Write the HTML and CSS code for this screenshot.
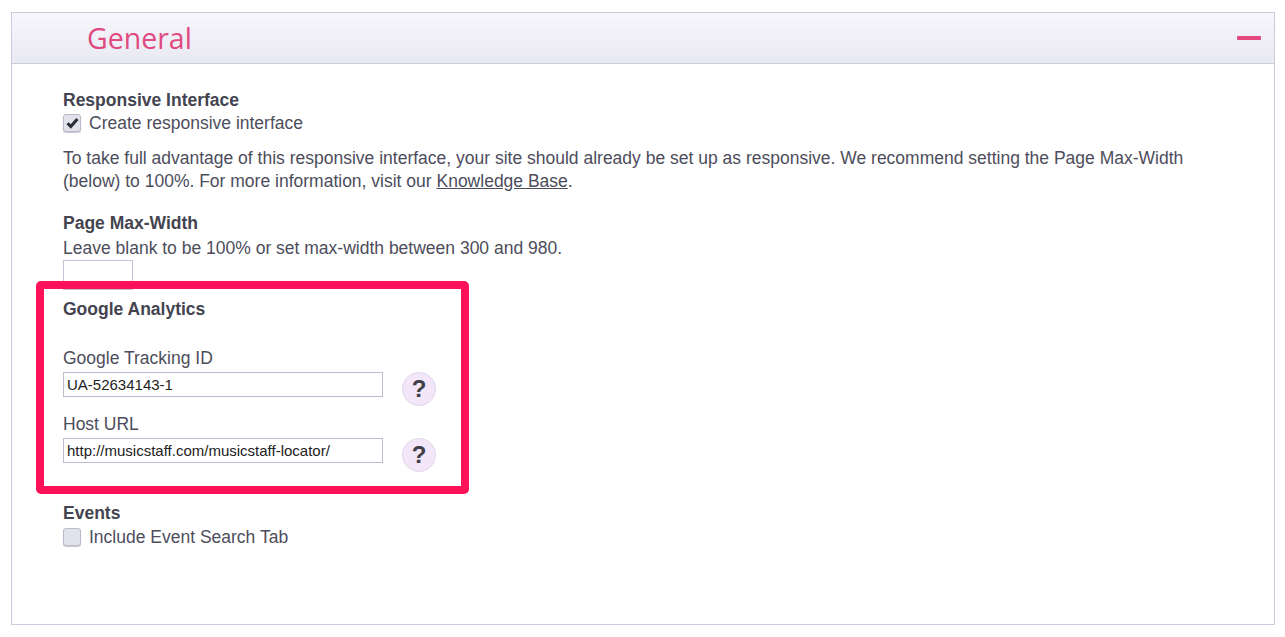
FILE: index.html
```html
<!DOCTYPE html>
<html lang="en">
<head>
    <meta charset="UTF-8">
    <meta name="viewport" content="width=device-width, initial-scale=1.0">
    <title>General Settings</title>
    <link rel="stylesheet" href="styles.css">
</head>
<body>
    <section class="panel">
        <header class="panel-head">
            <h2>General</h2>
            <span class="collapse"></span>
        </header>
        <div class="panel-body">
            <div class="field-title">Responsive Interface</div>
            <label class="check">
                <span class="box">
                    <svg width="13" height="12" viewBox="0 0 13 12"><path d="M1.5 6.2 L4.8 9.6 L11.4 2" fill="none" stroke="#2b2b32" stroke-width="3"/></svg>
                </span>
                Create responsive interface
            </label>
            <p class="note">To take full advantage of this responsive interface, your site should already be set up as responsive. We recommend setting the Page Max-Width (below) to 100%. For more information, visit our <a href="#">Knowledge Base</a>.</p>

            <div class="field-title max-title">Page Max-Width</div>
            <div class="hint">Leave blank to be 100% or set max-width between 300 and 980.</div>
            <input type="text" class="small-input">

            <div class="analytics">
                <div class="field-title">Google Analytics</div>
                <div class="input-label first">Google Tracking ID</div>
                <div class="input-row">
                    <input type="text" class="text-input" value="UA-52634143-1">
                    <span class="help">?</span>
                </div>
                <div class="input-label">Host URL</div>
                <div class="input-row">
                    <input type="text" class="text-input" value="http://musicstaff.com/musicstaff-locator/">
                    <span class="help">?</span>
                </div>
            </div>

            <div class="field-title events-title">Events</div>
            <label class="check events-check">
                <span class="box"></span>
                Include Event Search Tab
            </label>
        </div>
    </section>
    <div class="highlight"></div>
</body>
</html>
```

FILE: styles.css
```css
body {
    margin: 0;
    padding: 12px 10px 0 11px;
    font-family: "Liberation Sans", Arial, sans-serif;
    font-size: 17.5px;
    color: #4d4d5c;
    background: #fff;
}
.panel {
    height: 613px;
    box-sizing: border-box;
    border: 1px solid #cbcbdb;
}
.panel-head {
    height: 51px;
    box-sizing: border-box;
    border-bottom: 1px solid #cbcbdb;
    background: linear-gradient(#f7f6fd, #e9e9f2);
    display: flex;
    align-items: center;
    justify-content: space-between;
    padding: 0 13px 0 75px;
}
.panel-head h2 {
    margin: 0;
    font-family: "Open Sans", sans-serif;
    font-weight: 400;
    font-size: 28.5px;
    color: #e04a80;
}
.collapse {
    width: 24px;
    height: 4px;
    background: #e5487f;
    border-radius: 1px;
}
.panel-body {
    padding: 26px 51px 0;
}
.field-title {
    font-weight: bold;
    line-height: 20px;
    color: #444450;
}
.check {
    display: flex;
    align-items: center;
    gap: 8px;
    line-height: 26px;
}
.events-check {
    margin-top: 1px;
}
.box {
    width: 16px;
    height: 16px;
    border: 1px solid #b9b9c9;
    border-radius: 3px;
    background: #e2e2ed;
    box-shadow: 0 1px 1px #c9c9d6;
    display: flex;
    align-items: center;
    justify-content: center;
}
.note {
    margin: 11px 0 0;
    line-height: 23px;
}
.note a {
    color: inherit;
}
.max-title {
    margin-top: 20px;
}
.hint {
    margin-top: 3px;
    line-height: 24px;
}
.small-input {
    display: block;
    width: 70px;
    height: 30px;
    box-sizing: border-box;
    border: 1px solid #c3c3d3;
    margin: 0;
    padding: 0;
}
.analytics {
    margin-top: 9px;
}
.input-label {
    line-height: 24px;
    margin: 6px 0 2px;
}
.input-label.first {
    margin-top: 27px;
}
.input-row {
    display: flex;
    align-items: flex-start;
    gap: 19px;
}
.text-input {
    width: 320px;
    height: 25px;
    box-sizing: border-box;
    border: 1px solid #bdbdcd;
    margin: 0;
    padding: 0 3px;
    font-family: "Liberation Sans", Arial, sans-serif;
    font-size: 15px;
    color: #222;
}
.help {
    width: 32px;
    height: 32px;
    border: 1px solid #e0d8ea;
    border-radius: 50%;
    background: #f3e6f8;
    display: flex;
    align-items: center;
    justify-content: center;
    font-weight: bold;
    font-size: 24px;
    color: #3f3f48;
}
.events-title {
    margin-top: 31px;
}
.highlight {
    position: absolute;
    left: 36px;
    top: 281px;
    width: 433px;
    height: 213px;
    box-sizing: border-box;
    border: 8px solid #ff1159;
    border-radius: 5px;
}
```
